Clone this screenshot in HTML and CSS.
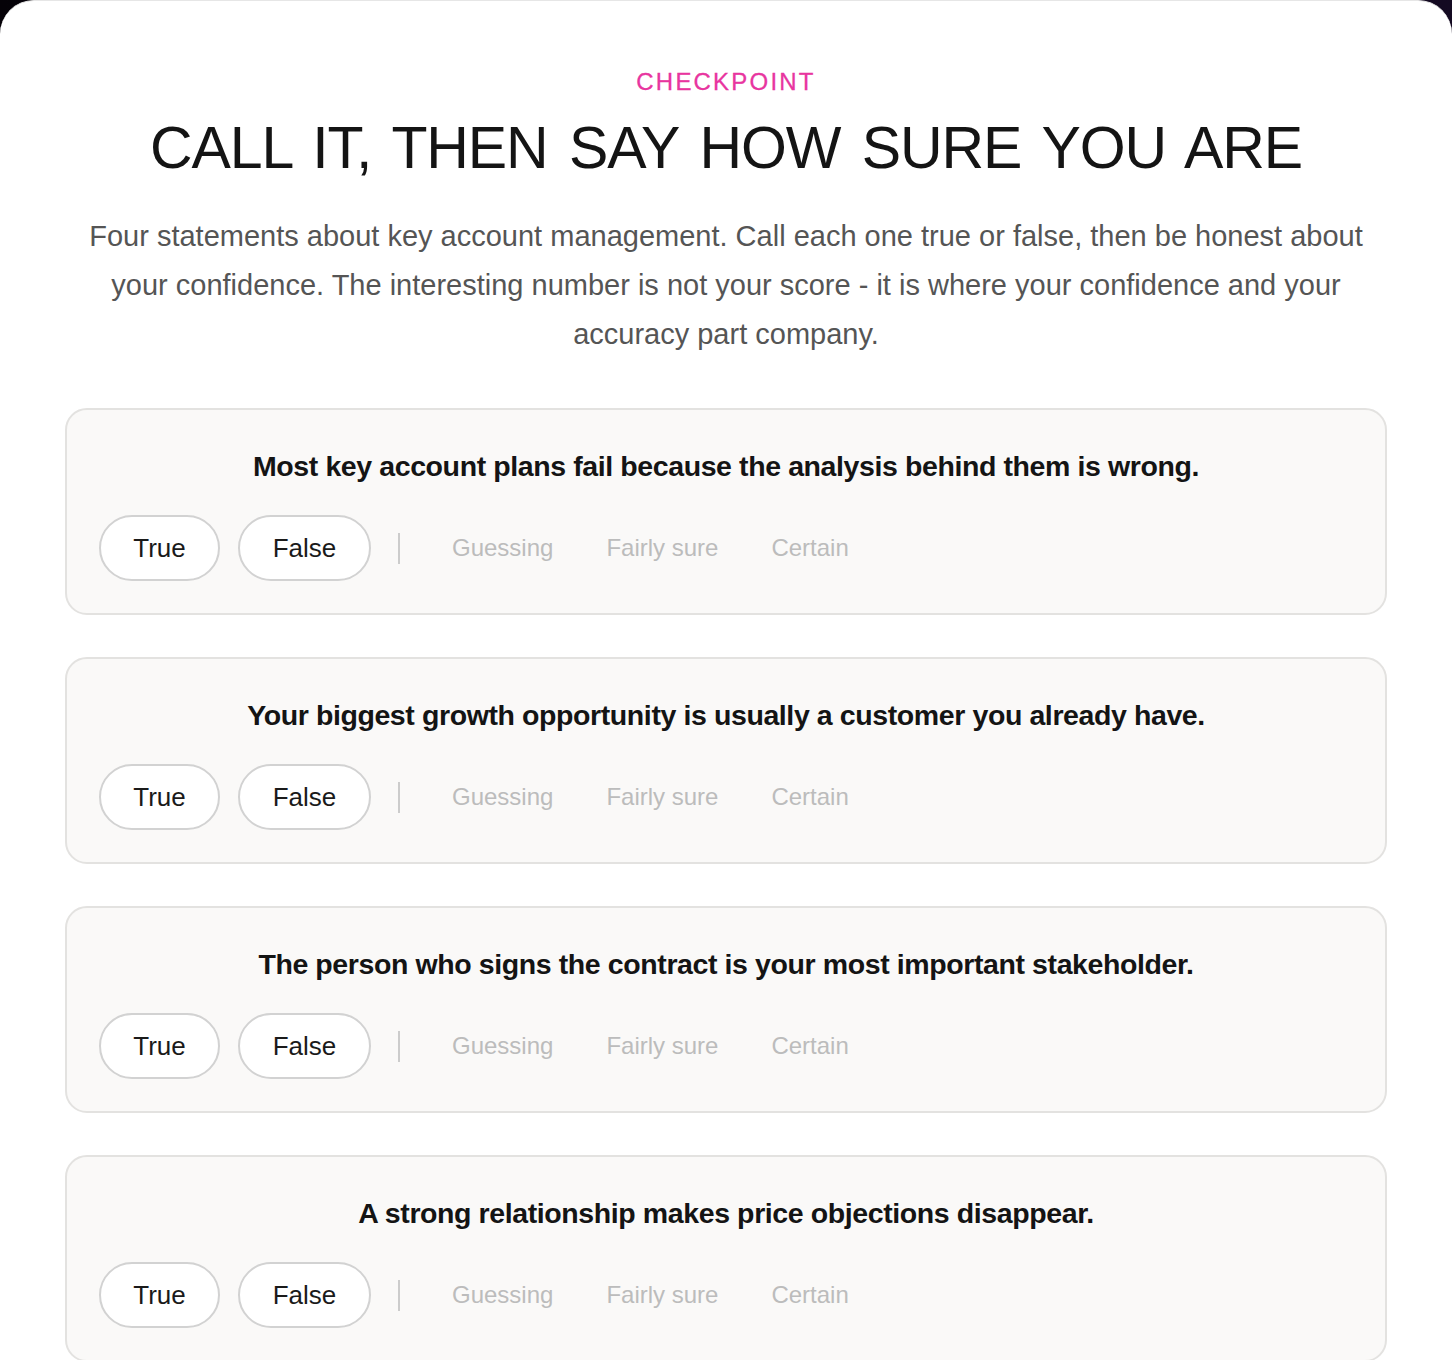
FILE: index.html
```html
<!DOCTYPE html>
<html lang="en">
<head>
<meta charset="utf-8">
<title>Checkpoint</title>
<link rel="stylesheet" href="styles.css">
</head>
<body>
<main class="panel">
  <header class="intro">
    <p class="eyebrow">CHECKPOINT</p>
    <h1 class="title">CALL IT, THEN SAY HOW SURE YOU ARE</h1>
    <p class="lead">Four statements about key account management. Call each one true or false, then be honest about your confidence. The interesting number is not your score - it is where your confidence and your accuracy part company.</p>
  </header>
  <section class="list">
    <div class="card">
      <p class="statement">Most key account plans fail because the analysis behind them is wrong.</p>
      <div class="controls">
        <button class="pill pill-true">True</button>
        <button class="pill pill-false">False</button>
        <span class="sep"></span>
        <span class="conf">Guessing</span>
        <span class="conf">Fairly sure</span>
        <span class="conf">Certain</span>
      </div>
    </div>
    <div class="card">
      <p class="statement">Your biggest growth opportunity is usually a customer you already have.</p>
      <div class="controls">
        <button class="pill pill-true">True</button>
        <button class="pill pill-false">False</button>
        <span class="sep"></span>
        <span class="conf">Guessing</span>
        <span class="conf">Fairly sure</span>
        <span class="conf">Certain</span>
      </div>
    </div>
    <div class="card">
      <p class="statement">The person who signs the contract is your most important stakeholder.</p>
      <div class="controls">
        <button class="pill pill-true">True</button>
        <button class="pill pill-false">False</button>
        <span class="sep"></span>
        <span class="conf">Guessing</span>
        <span class="conf">Fairly sure</span>
        <span class="conf">Certain</span>
      </div>
    </div>
    <div class="card">
      <p class="statement">A strong relationship makes price objections disappear.</p>
      <div class="controls">
        <button class="pill pill-true">True</button>
        <button class="pill pill-false">False</button>
        <span class="sep"></span>
        <span class="conf">Guessing</span>
        <span class="conf">Fairly sure</span>
        <span class="conf">Certain</span>
      </div>
    </div>
  </section>
</main>
</body>
</html>
```
FILE: styles.css
```css
* { box-sizing: border-box; }
html, body { margin: 0; padding: 0; }
body {
  background: linear-gradient(90deg, #050208 0%, #140a22 100%);
  font-family: "Liberation Sans", Arial, sans-serif;
  min-height: 1360px;
}
.panel {
  background: #ffffff;
  border-top: 1px solid #e6e6e6;
  border-radius: 34px 34px 0 0;
  min-height: 1360px;
  padding: 66px 65px 40px;
}
.intro { text-align: center; }
.eyebrow {
  margin: 0;
  color: #e8359f;
  font-size: 24px;
  line-height: 30px;
  letter-spacing: 2.2px;
  font-weight: 400;
  -webkit-text-stroke: 0.3px #e8359f;
}
.title {
  margin: 13px 0 0;
  font-size: 59px;
  line-height: 76px;
  font-weight: 400;
  color: #141414;
  letter-spacing: -1.1px;
  word-spacing: 6px;
}
.lead {
  margin: 26px auto 0;
  max-width: 1300px;
  font-size: 29px;
  line-height: 49px;
  color: #555555;
}
.list {
  margin-top: 49px;
  display: flex;
  flex-direction: column;
  gap: 42px;
}
.card {
  background: #faf9f8;
  border: 2px solid #e3e2e0;
  border-radius: 22px;
  padding: 32px 32px 32px;
}
.statement {
  margin: 0;
  text-align: center;
  font-size: 28.5px;
  line-height: 48px;
  font-weight: 700;
  color: #141414;
  letter-spacing: -0.4px;
}
.controls {
  margin-top: 25px;
  display: flex;
  align-items: center;
  gap: 18px;
}
.pill {
  height: 66px;
  border: 2px solid #d2d2d2;
  border-radius: 33px;
  background: #ffffff;
  font-family: inherit;
  font-size: 26px;
  color: #1a1a1a;
  padding: 0;
}
.pill-true { width: 121px; }
.pill-false { width: 133px; }
.sep {
  width: 2px;
  height: 31px;
  background: #cccccc;
  margin: 0 34px 0 9px;
}
.conf {
  font-size: 24px;
  color: #bcbcbc;
  margin-right: 35px;
}
```
